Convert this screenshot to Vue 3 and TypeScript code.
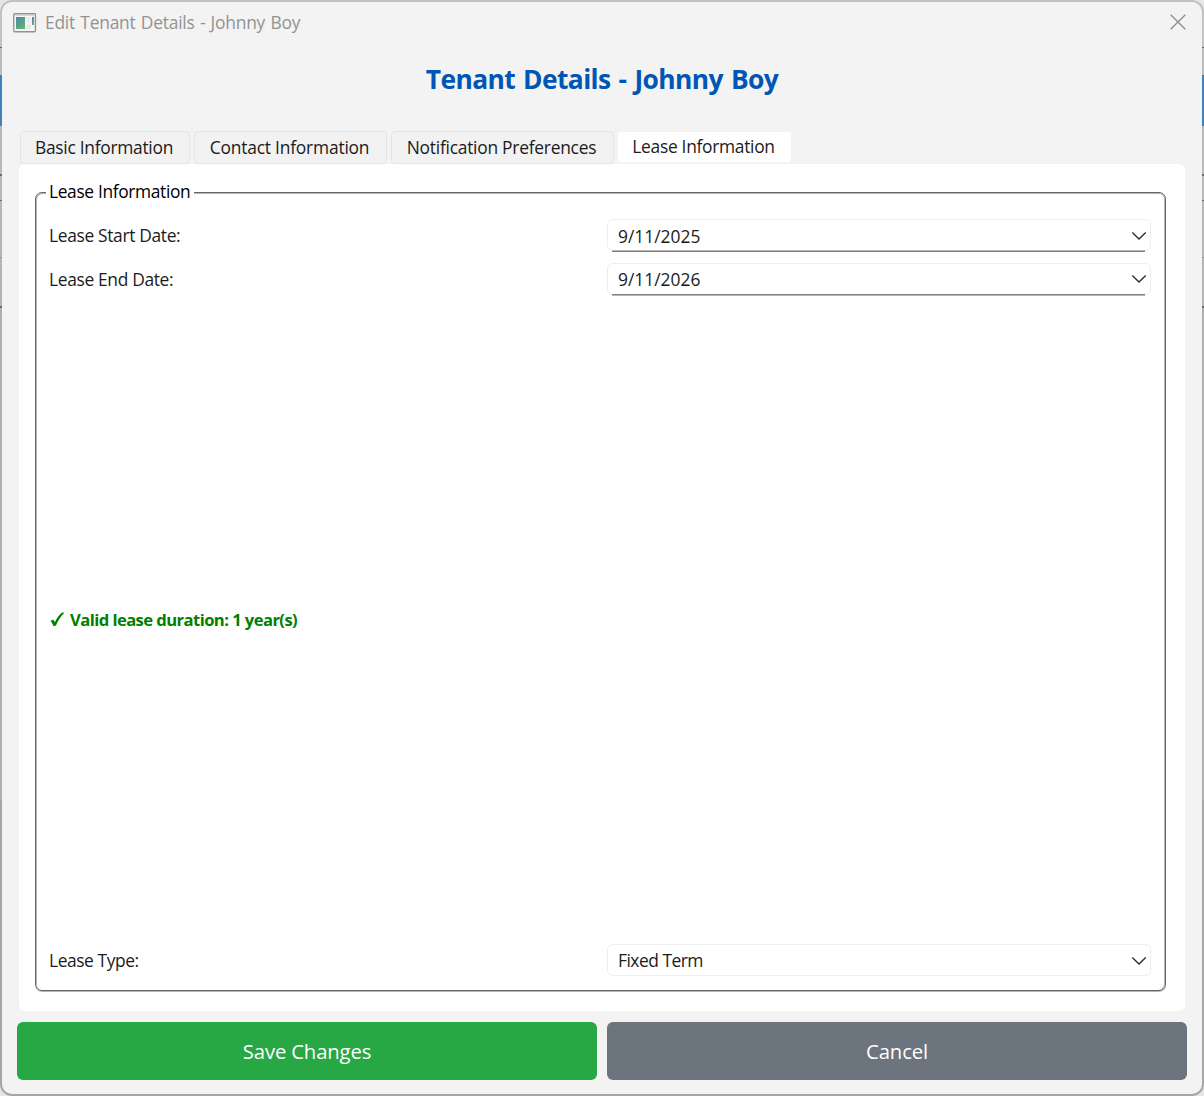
<script setup lang="ts">
import { ref } from 'vue'

interface Tab {
  label: string
  cls: string
}

const tabs: Tab[] = [
  { label: 'Basic Information', cls: 'basic' },
  { label: 'Contact Information', cls: 'contact' },
  { label: 'Notification Preferences', cls: 'notify' },
  { label: 'Lease Information', cls: 'lease' },
]
const active = ref(3)
const tenant = 'Johnny Boy'
</script>

<template>
  <div class="desktop">
    <div class="dialog">
      <header class="titlebar">
        <svg class="app-icon" width="24" height="20" viewBox="0 0 24 20">
          <defs>
            <linearGradient id="pane" x1="0" y1="0" x2="0.6" y2="1">
              <stop offset="0" stop-color="#4d83ad" />
              <stop offset="1" stop-color="#61b274" />
            </linearGradient>
          </defs>
          <rect x="0.75" y="0.75" width="21.7" height="18" rx="1" fill="#f4f5f6" stroke="#8d9299" stroke-width="1.3" />
          <path d="M2 2.2h19" stroke="#c5cad0" stroke-width="1" />
          <rect x="3" y="4" width="9" height="12" fill="url(#pane)" />
          <rect x="13.5" y="4" width="4" height="6" fill="#ececec" />
          <rect x="13.5" y="11.5" width="4" height="4.5" fill="#e6e6e6" />
          <rect x="19" y="4" width="2" height="8" fill="url(#pane)" />
        </svg>
        <span class="caption">Edit Tenant Details - {{ tenant }}</span>
        <svg class="close" width="16" height="16" viewBox="0 0 16 16">
          <path d="M0.7 0.7L15.3 15.3M15.3 0.7L0.7 15.3" stroke="#8c8c8c" stroke-width="1.3" fill="none" />
        </svg>
      </header>

      <h1><span>Tenant Details - {{ tenant }}</span></h1>

      <nav class="tabs">
        <button
          v-for="(tab, i) in tabs"
          :key="tab.label"
          :class="['tab', tab.cls, { active: i === active }]"
          @click="active = i"
        >
          <span>{{ tab.label }}</span>
        </button>
      </nav>

      <main class="pane">
        <fieldset>
          <legend>Lease Information</legend>
          <div class="rows">
            <div class="row">
              <label class="start">Lease Start Date:</label>
              <div class="field date first">
                <span>9/11/2025</span>
                <svg width="16" height="10" viewBox="0 0 16 10"><path d="M1.3 1.5L8 8L14.7 1.5" /></svg>
              </div>
            </div>
            <div class="row">
              <label class="end">Lease End Date:</label>
              <div class="field date">
                <span>9/11/2026</span>
                <svg width="16" height="10" viewBox="0 0 16 10"><path d="M1.3 1.5L8 8L14.7 1.5" /></svg>
              </div>
            </div>
            <div class="status">
              <svg width="15" height="15" viewBox="0 0 15 15">
                <path d="M0.4 9L3.2 7.4L4.9 10.2C7 5.8 9.4 2.6 12.2 0.6L14.4 0.8C10.8 4.2 8.1 8.4 6 13.5L3.5 14.2C2.8 12.2 1.9 10.4 0.4 9Z" fill="#008000" />
              </svg>
              <span>Valid lease duration: 1 year(s)</span>
            </div>
            <div class="row">
              <label class="type">Lease Type:</label>
              <div class="field term">
                <span>Fixed Term</span>
                <svg width="16" height="10" viewBox="0 0 16 10"><path d="M1.3 1.5L8 8L14.7 1.5" /></svg>
              </div>
            </div>
          </div>
        </fieldset>
      </main>

      <footer>
        <button class="save"><span>Save Changes</span></button>
        <button class="cancel"><span>Cancel</span></button>
      </footer>
    </div>
  </div>
</template>

<style>
body {
  margin: 0;
  overflow: hidden;
  background: #e6e6e6;
}
</style>

<style scoped>
* {
  box-sizing: border-box;
}

.desktop {
  width: 1204px;
  height: 1096px;
  padding: 2px;
  border-radius: 12px;
  font-family: 'Open Sans', 'Noto Sans', sans-serif;
  font-size: 17.4px;
  color: #1b1b1b;
  background: linear-gradient(
    #c2c2c2 0 47px, #666 47px 48px, #bcbcbc 48px 75px, #3f83bd 75px 126px,
    #b8b8b8 126px 174px, #6a6a6a 174px 176px, #b8b8b8 176px 200px,
    #6a6a6a 200px 201px, #b5b5b5 201px 257px, #989898 257px 258px, #b4b4b4 258px 306px,
    #6a6a6a 306px 308px, #b0b0b0 308px 800px, #a6a6a6 800px
  );
}

.dialog {
  height: 1092px;
  padding: 0 15px;
  display: flex;
  flex-direction: column;
  background: #f3f3f3;
  border-radius: 10px;
}

.titlebar {
  height: 41px;
  margin: 0 -4px;
  display: flex;
  align-items: center;
  flex: none;
}

.caption {
  margin-left: 8px;
  padding-bottom: 2px;
  letter-spacing: -0.22px;
  word-spacing: 1px;
  color: #929292;
  white-space: nowrap;
}

.close {
  margin: 0 5.2px 1px auto;
}

h1 {
  margin: 18px 0 0;
  height: 36px;
  line-height: 36px;
  text-align: center;
  font-size: 26.4px;
  letter-spacing: -0.62px;
  word-spacing: 1.8px;
  font-weight: 700;
  color: #0056b3;
  white-space: nowrap;
}

button {
  border: 0;
  padding: 0;
  font: inherit;
  color: inherit;
}

.tabs {
  margin-top: 34px;
  margin-left: 3px;
  height: 33px;
  display: flex;
  gap: 4px;
  flex: none;
}

.tab {
  height: 33px;
  padding: 0 2px 2px 0;
  border: 1px solid #e5e5e5;
  border-radius: 4px;
  background: #f2f2f2;
  white-space: nowrap;
}

.tab.basic { width: 170px; letter-spacing: -0.28px; }
.tab.contact { width: 193px; letter-spacing: -0.2px; }
.tab.notify { width: 223px; letter-spacing: -0.25px; }
.tab.lease { width: 173px; letter-spacing: -0.3px; }

.tab.active {
  height: 30px;
  margin-top: 1px;
  border: 0;
  border-radius: 3px;
  background: #fff;
}

.pane {
  height: 847px;
  margin: 0 2px;
  padding: 16px 19px 19px 16px;
  background: #fff;
  border-radius: 6px;
  flex: none;
}

fieldset {
  height: 811px;
  margin: 0;
  padding: 0 14px 0 13px;
  border: 1px solid #666;
  border-radius: 7px;
  box-shadow: inset 1px 1px #b5b5b5, inset -1px 0 #b5b5b5, 0 1px #b5b5b5;
}

legend {
  margin-left: -3px;
  width: 148px;
  padding: 0 3px;
  height: 24px;
  line-height: 22px;
  letter-spacing: -0.36px;
  background: #fff;
  color: #000;
  white-space: nowrap;
}

.rows {
  display: flex;
  flex-direction: column;
  height: 784px;
  padding-top: 15px;
}

.row {
  display: flex;
  align-items: center;
  height: 32px;
  margin-bottom: 12px;
  flex: none;
}

.row label {
  width: 558px;
  letter-spacing: -0.34px;
  white-space: nowrap;
}

.row .type {
  letter-spacing: -0.42px;
}

.field {
  flex: 1;
  height: 32px;
  padding: 0 3px 0 10px;
  display: flex;
  align-items: center;
  justify-content: space-between;
  border: 1px solid #eee;
  border-radius: 6px;
  position: relative;
}

.first {
  padding-top: 2px;
}

.term span {
  letter-spacing: -0.5px;
}

.term svg {
  margin-top: 2px;
}

.date::after {
  content: '';
  position: absolute;
  left: 4px;
  right: 5px;
  bottom: -2px;
  height: 2px;
  background: linear-gradient(#b4b4b4 50%, #808080 50%);
}

.date:not(.first)::after {
  background: linear-gradient(#808080 50%, #b4b4b4 50%);
}

.field path {
  fill: none;
  stroke: #30261f;
  stroke-width: 1.3;
}

.status {
  flex: 1;
  display: flex;
  align-items: center;
  gap: 5px;
  padding: 0 0 12px 1px;
  font-size: 16.6px;
  letter-spacing: -0.56px;
  font-weight: 700;
  color: #008000;
  white-space: nowrap;
}

.row:last-child {
  margin-bottom: 12px;
}

footer {
  display: flex;
  gap: 10px;
  margin-top: 11px;
  flex: none;
}

footer button {
  flex: 1;
  height: 58px;
  border-radius: 6px;
  color: #fff;
  font-size: 20.3px;
  letter-spacing: -0.15px;
}

.save { background: #28a745; }
.cancel { background: #6c757d; }
</style>
